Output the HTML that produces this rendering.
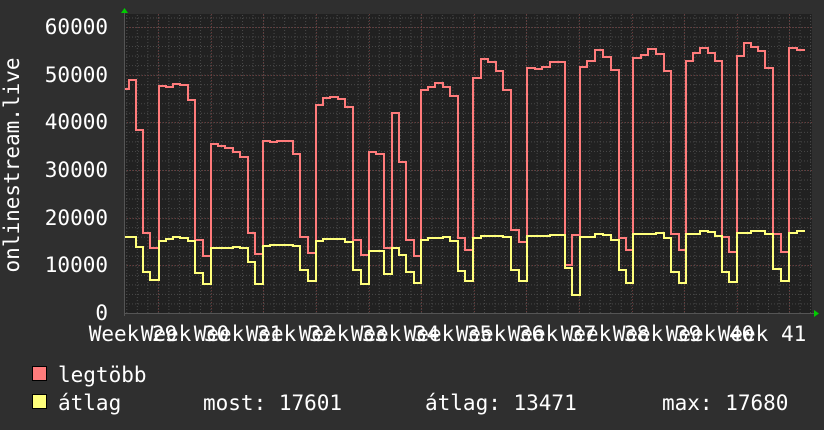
<!DOCTYPE html>
<html><head><meta charset="utf-8"><style>
html,body{margin:0;padding:0;background:#2f2f2f;}
svg{display:block}
text{font-family:"DejaVu Sans Mono","Liberation Mono",monospace;fill:#fff;font-size:21px}
</style></head><body>
<svg width="824" height="430" viewBox="0 0 824 430" xmlns="http://www.w3.org/2000/svg">
<defs>
<pattern id="minh" width="824" height="9.533" patternUnits="userSpaceOnUse" y="313">
<line x1="0" y1="0.5" x2="824" y2="0.5" stroke="#4a4a4a" stroke-width="1" stroke-dasharray="1,2"/>
</pattern>
<pattern id="minv" width="10.52" height="430" patternUnits="userSpaceOnUse" x="126.3">
<line x1="0.5" y1="0" x2="0.5" y2="430" stroke="#4a4a4a" stroke-width="1" stroke-dasharray="1,2"/>
</pattern>
</defs>
<rect x="0" y="0" width="824" height="430" fill="#2f2f2f"/>
<rect x="124" y="14" width="688" height="299" fill="#212121"/>
<rect x="124" y="14" width="688" height="299" fill="url(#minh)"/>
<rect x="124" y="14" width="688" height="299" fill="url(#minv)"/>
<g stroke="#6a3a3a" stroke-width="1" stroke-dasharray="1,2">
<line x1="124" y1="27.5" x2="812" y2="27.5"/>
<line x1="124" y1="75.5" x2="812" y2="75.5"/>
<line x1="124" y1="122.5" x2="812" y2="122.5"/>
<line x1="124" y1="170.5" x2="812" y2="170.5"/>
<line x1="124" y1="218.5" x2="812" y2="218.5"/>
<line x1="124" y1="265.5" x2="812" y2="265.5"/>
<line x1="158.5" y1="14" x2="158.5" y2="313"/>
<line x1="211.5" y1="14" x2="211.5" y2="313"/>
<line x1="263.5" y1="14" x2="263.5" y2="313"/>
<line x1="316.5" y1="14" x2="316.5" y2="313"/>
<line x1="369.5" y1="14" x2="369.5" y2="313"/>
<line x1="421.5" y1="14" x2="421.5" y2="313"/>
<line x1="474.5" y1="14" x2="474.5" y2="313"/>
<line x1="526.5" y1="14" x2="526.5" y2="313"/>
<line x1="579.5" y1="14" x2="579.5" y2="313"/>
<line x1="632.5" y1="14" x2="632.5" y2="313"/>
<line x1="684.5" y1="14" x2="684.5" y2="313"/>
<line x1="737.5" y1="14" x2="737.5" y2="313"/>
<line x1="789.5" y1="14" x2="789.5" y2="313"/>
</g>
<line x1="124" y1="313.5" x2="816" y2="313.5" stroke="#555" />
<line x1="124.5" y1="10" x2="124.5" y2="316" stroke="#555"/>
<polygon points="121,13 124.5,8 128,13" fill="#0c0"/>
<polygon points="814,310 819,313.5 814,317" fill="#0c0"/>
<path fill="none" stroke="#ff7b7b" stroke-width="2" d="M125,89 H129 V80 H136 V130 H143 V233 H150 V248 H159 V86 H166 V87 H173 V84 H180 V85 H188 V100 H195 V240 H203 V256 H211 V144 H218 V146 H225 V148 H233 V152 H240 V157 H248 V233 H255 V254 H263 V141 H270 V142 H277 V141 H285 V141 H293 V154 H300 V237 H308 V253 H316 V105 H323 V98 H330 V97 H338 V99 H345 V107 H353 V240 H361 V255 H369 V152 H376 V154 H384 V248 H392 V113 H399 V162 H406 V240 H414 V256 H421 V90 H428 V87 H435 V83 H443 V87 H450 V96 H458 V238 H465 V250 H473 V78 H481 V59 H488 V62 H496 V71 H503 V90 H511 V230 H519 V242 H527 V68 H535 V69 H542 V67 H550 V62 H558 V62 H565 V265 H572 V235 H580 V67 H587 V61 H595 V50 H603 V57 H611 V70 H619 V238 H626 V250 H633 V58 H641 V55 H648 V49 H656 V54 H664 V71 H671 V234 H679 V250 H686 V61 H693 V53 H700 V48 H708 V53 H715 V61 H722 V237 H729 V252 H737 V56 H744 V43 H751 V47 H758 V51 H765 V68 H773 V234 H781 V252 H789 V48 H797 V50 H805 V50"/>
<path fill="none" stroke="#ffff7b" stroke-width="2" d="M125,237 H136 V247 H143 V272 H150 V280 H159 V241 H166 V239 H173 V237 H180 V238 H188 V241 H195 V273 H203 V284 H211 V248 H218 V248 H233 V247 H240 V248 H248 V262 H255 V284 H263 V246 H270 V245 H293 V246 H300 V270 H308 V281 H316 V241 H323 V239 H338 V239 H345 V242 H353 V270 H361 V284 H369 V251 H384 V274 H392 V248 H399 V255 H406 V272 H414 V283 H421 V240 H428 V238 H443 V237 H450 V241 H458 V271 H465 V281 H473 V238 H481 V236 H503 V237 H511 V270 H519 V281 H527 V236 H550 V235 H558 V235 H565 V268 H572 V295 H580 V237 H595 V234 H603 V235 H611 V240 H619 V270 H626 V283 H633 V234 H656 V233 H664 V238 H671 V272 H679 V283 H686 V234 H700 V231 H708 V232 H715 V236 H722 V272 H729 V282 H737 V233 H751 V231 H765 V234 H773 V269 H781 V281 H789 V233 H797 V231 H805 V231"/>
<g text-anchor="end">
<text x="108" y="34">60000</text>
<text x="108" y="82">50000</text>
<text x="108" y="129">40000</text>
<text x="108" y="177">30000</text>
<text x="108" y="225">20000</text>
<text x="108" y="272">10000</text>
<text x="108" y="320">0</text>
</g>
<text transform="translate(19,165) rotate(-90)" text-anchor="middle">onlinestream.live</text>
<g text-anchor="middle">
<text x="133" y="341">Week 29</text>
<text x="185" y="341">Week 30</text>
<text x="238" y="341">Week 31</text>
<text x="290" y="341">Week 32</text>
<text x="343" y="341">Week 33</text>
<text x="395" y="341">Week 34</text>
<text x="448" y="341">Week 35</text>
<text x="500" y="341">Week 36</text>
<text x="552" y="341">Week 37</text>
<text x="605" y="341">Week 38</text>
<text x="657" y="341">Week 39</text>
<text x="710" y="341">Week 40</text>
<text x="762" y="341">Week 41</text>
</g>
<rect x="32.5" y="366.5" width="14" height="14" fill="#ff7b7b" stroke="#000"/>
<rect x="32.5" y="394.5" width="14" height="14" fill="#ffff7b" stroke="#000"/>
<text x="58" y="382">legtöbb</text>
<text x="58" y="410">átlag</text>
<text x="203" y="410">most: 17601</text>
<text x="425" y="410">átlag: 13471</text>
<text x="662" y="410">max: 17680</text>
</svg>
</body></html>
